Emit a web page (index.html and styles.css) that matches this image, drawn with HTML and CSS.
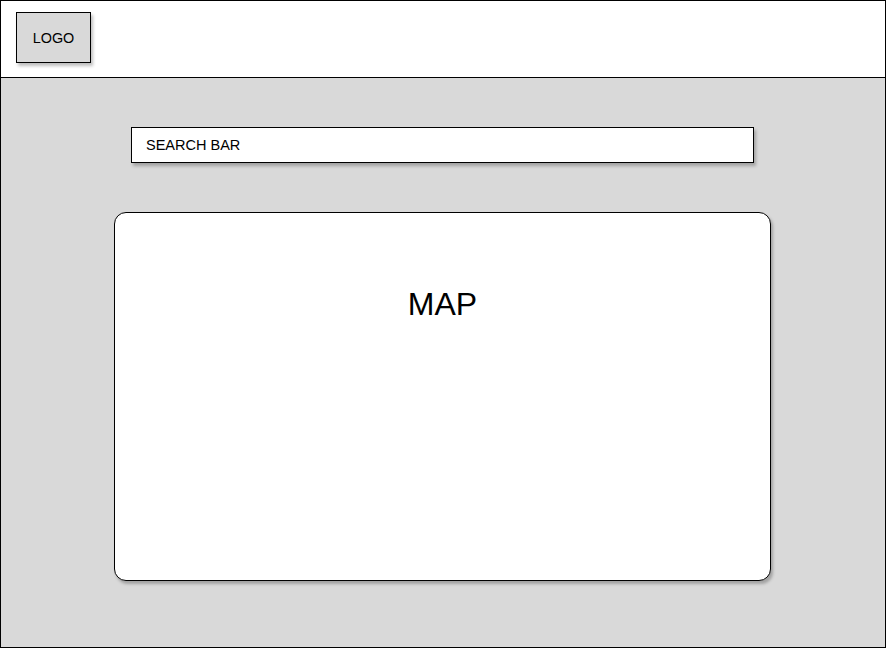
FILE: index.html
```html
<!DOCTYPE html>
<html>
<head>
<meta charset="utf-8">
<link rel="stylesheet" href="styles.css">
</head>
<body>
<div class="frame">
  <header class="header">
    <div class="logo">LOGO</div>
  </header>
  <main class="main">
    <div class="search">SEARCH BAR</div>
    <div class="map"><div class="map-title">MAP</div></div>
  </main>
</div>
</body>
</html>
```
FILE: styles.css
```css
* { box-sizing: border-box; }
html, body { margin: 0; padding: 0; }
body {
  font-family: "Liberation Sans", Arial, sans-serif;
  color: #000;
  background: #fff;
}
.frame {
  width: 886px;
  height: 648px;
  border: 1px solid #000;
  display: flex;
  flex-direction: column;
  background: #d9d9d9;
}
.header {
  height: 77px;
  flex: none;
  background: #fff;
  border-bottom: 1px solid #000;
  padding: 11px 0 0 15px;
}
.logo {
  width: 75px;
  height: 51px;
  border: 1px solid #000;
  background: #d9d9d9;
  display: flex;
  align-items: center;
  justify-content: center;
  font-size: 14.4px;
  box-shadow: 2px 3px 3px rgba(0,0,0,0.25);
}
.main {
  flex: 1;
  display: flex;
  flex-direction: column;
  padding-top: 49px;
}
.search {
  margin-left: 130px;
  width: 623px;
  height: 36px;
  border: 1px solid #000;
  background: #fff;
  font-size: 14.5px;
  display: flex;
  align-items: center;
  padding-left: 14px;
  box-shadow: 2px 3px 3px rgba(0,0,0,0.25);
}
.map {
  margin-top: 49px;
  margin-left: 113px;
  width: 657px;
  height: 369px;
  border: 1px solid #000;
  border-radius: 12px;
  background: #fff;
  box-shadow: 2px 3px 3px rgba(0,0,0,0.25);
  padding-top: 73px;
}
.map-title {
  text-align: center;
  font-size: 32px;
}
```
